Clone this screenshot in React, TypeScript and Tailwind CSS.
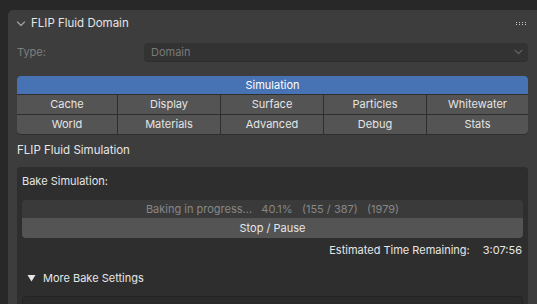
import React from "react";

const tabs1 = ["Cache", "Display", "Surface", "Particles", "Whitewater"];
const tabs2 = ["World", "Materials", "Advanced", "Debug", "Stats"];

export default function App() {
  return (
    <div
      className="w-[537px] h-[304px] overflow-hidden bg-[#282828] pl-[8px] pt-[10px] text-[11px] text-[#e0e0e0]"
      style={{ fontFamily: "Inter, 'Noto Sans', sans-serif" }}
    >
      <div className="h-[300px] bg-[#3d3d3d] rounded-tl-[5px] pl-[9px] pr-[9px]">
        {/* header */}
        <div className="h-[26px] pt-[1px] flex items-center relative">
          <svg width="10" height="8" viewBox="0 0 10 8" className="-ml-[1px] mr-[5px]">
            <path d="M1.5 2 L5 5.5 L8.5 2" stroke="#9a9a9a" strokeWidth="1.4" fill="none" strokeLinecap="round" strokeLinejoin="round" />
          </svg>
          <span className="text-[11.5px] text-[#e6e6e6] leading-none">FLIP Fluid Domain</span>
          <div className="ml-auto grid grid-cols-4 gap-x-[1px] gap-y-[1px] mr-[1px]">
            {Array.from({ length: 8 }).map((_, i) => (
              <div key={i} className="w-[1px] h-[1px] bg-[#c8c8c8] mr-[1px]" />
            ))}
          </div>
        </div>
        {/* type row */}
        <div className="mt-[7px] h-[18px] flex items-center">
          <span className="w-[127px] text-[#7e7e7e] pt-[1px]">Type:</span>
          <div className="flex-1 h-[18px] bg-[#333333] rounded-[4px] flex items-center pl-[7px] pr-[5px] text-[#7a7a7a] shadow-[0_1px_0_#2e2e2e]">
            <span className="pt-[1px]">Domain</span>
            <svg width="9" height="6" viewBox="0 0 9 6" className="ml-auto">
              <path d="M1 1.2 L4.5 4.5 L8 1.2" stroke="#5e5e5e" strokeWidth="1.3" fill="none" strokeLinecap="round" />
            </svg>
          </div>
        </div>
        {/* tabs */}
        <div className="mt-[15px] rounded-[4px] overflow-hidden bg-[#2e2e2e] shadow-[0_1px_0_#2f2f2f]">
          <div className="h-[18px] bg-[#4772b3] flex items-center justify-center text-white">Simulation</div>
          <div className="grid grid-cols-[100px_102px_102px_102px_1fr] gap-[1px] pt-[1px]">
            {tabs1.map((t) => (
              <div key={t} className="h-[19px] bg-[#545454] flex items-center justify-center text-[#e4e4e4]">{t}</div>
            ))}
            {tabs2.map((t) => (
              <div key={t} className="h-[19px] bg-[#545454] flex items-center justify-center text-[#e4e4e4]">{t}</div>
            ))}
          </div>
        </div>
        {/* sub heading */}
        <div className="mt-[9px] h-[16px] flex items-center text-[#e6e6e6] text-[11.5px]">FLIP Fluid Simulation</div>
        {/* inner box */}
        <div className="mt-[8px] bg-[#2e2e2e] rounded-t-[4px] px-[5px] pt-[6px] h-[200px]">
          <div className="h-[16px] flex items-center text-[#e6e6e6]">Bake Simulation:</div>
          <div className="mt-[11px] rounded-[4px] overflow-hidden">
            <div className="h-[18px] bg-[#3a3a3a] flex items-center justify-center text-[#878787] whitespace-pre">
              Baking in progress...   40.1%   (155 / 387)   (1979)
            </div>
            <div className="h-[20px] bg-[#545454] flex items-center justify-center text-[#e6e6e6]">Stop / Pause</div>
          </div>
          <div className="mt-[4px] h-[16px] flex items-center justify-end pr-[1px] text-[#e6e6e6]">
            <span>Estimated Time Remaining:</span>
            <span className="ml-[13px]">3:07:56</span>
          </div>
          <div className="mt-[12px] h-[16px] flex items-center pl-[5px] text-[#e6e6e6]">
            <svg width="9" height="8" viewBox="0 0 9 8" className="mr-[7px]">
              <path d="M0.5 1 L8.5 1 L4.5 7.5 Z" fill="#e6e6e6" />
            </svg>
            <span>More Bake Settings</span>
          </div>
          <div className="mt-[10px] h-[30px] bg-[#2a2a2a] border border-[#232323] rounded-t-[4px]" />
        </div>
      </div>
    </div>
  );
}
